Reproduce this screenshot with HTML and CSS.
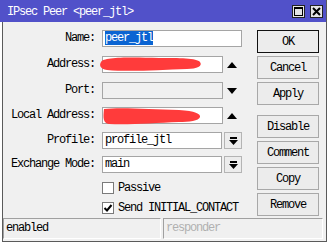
FILE: index.html
```html
<!DOCTYPE html>
<html lang="en">
<head>
    <meta charset="UTF-8">
    <title>IPsec Peer</title>
    <link rel="stylesheet" href="styles.css">
</head>
<body>
    <div class="window">
        <div class="titlebar">
            <span class="title">IPsec Peer &lt;peer_jtl&gt;</span>
            <div class="tb-buttons">
                <span class="tb-btn">
                    <svg width="11" height="11" viewBox="0 0 11 11"><rect x="1.5" y="1.5" width="8" height="8" fill="none" stroke="#000" stroke-width="1"/><rect x="1" y="1" width="9" height="2" fill="#000"/></svg>
                </span>
                <span class="tb-btn">
                    <svg width="11" height="11" viewBox="0 0 11 11"><path d="M2 2 L9 9 M9 2 L2 9" stroke="#000" stroke-width="2"/></svg>
                </span>
            </div>
        </div>

        <div class="content">
            <div class="form">
                <label class="lbl">Name:</label>
                <div class="field"><div class="input wide"><span class="sel">peer_jtl</span></div></div>

                <label class="lbl">Address:</label>
                <div class="field">
                    <div class="input mid redacted">
                        <svg class="scribble" width="106" height="18" viewBox="0 0 106 18"><path d="M2 7 C4 2, 30 2, 60 3 C80 3, 98 3, 101 7 C104 11, 98 14, 88 14 C60 15, 30 17, 8 15 C1 14, 0 10, 2 7 Z" fill="#ff3b3b"/></svg>
                    </div>
                    <svg class="arrow" width="10" height="6" viewBox="0 0 10 6"><polygon points="5,0 10,6 0,6" fill="#000"/></svg>
                </div>

                <label class="lbl">Port:</label>
                <div class="field">
                    <div class="input mid disabled"></div>
                    <svg class="arrow" width="10" height="6" viewBox="0 0 10 6"><polygon points="0,0 10,0 5,6" fill="#000"/></svg>
                </div>

                <label class="lbl">Local Address:</label>
                <div class="field">
                    <div class="input mid redacted">
                        <svg class="scribble" width="106" height="20" viewBox="0 0 106 20"><path d="M5 3 C20 1, 50 3, 80 4 C96 5, 102 8, 101 11 C100 15, 90 16, 80 16 C55 17, 30 19, 10 18 C4 17, 4 12, 5 3 Z" fill="#ff3b3b"/></svg>
                    </div>
                    <svg class="arrow" width="10" height="6" viewBox="0 0 10 6"><polygon points="5,0 10,6 0,6" fill="#000"/></svg>
                </div>

                <label class="lbl">Profile:</label>
                <div class="field">
                    <div class="input combo">profile_jtl</div>
                    <span class="drop"><svg width="9" height="8" viewBox="0 0 9 8"><rect x="1" y="0" width="7" height="2" fill="#000"/><polygon points="0,3 9,3 4.5,8" fill="#000"/></svg></span>
                </div>

                <label class="lbl">Exchange Mode:</label>
                <div class="field">
                    <div class="input combo">main</div>
                    <span class="drop"><svg width="9" height="8" viewBox="0 0 9 8"><rect x="1" y="0" width="7" height="2" fill="#000"/><polygon points="0,3 9,3 4.5,8" fill="#000"/></svg></span>
                </div>

                <span></span>
                <div class="check"><span class="box"></span>Passive</div>

                <span></span>
                <div class="check"><span class="box"><svg width="10" height="10" viewBox="0 0 10 10"><path d="M1.5 5 L4 7.5 L8.5 2" fill="none" stroke="#000" stroke-width="2"/></svg></span>Send INITIAL_CONTACT</div>
            </div>

            <div class="actions">
                <button class="btn default">OK</button>
                <button class="btn">Cancel</button>
                <button class="btn">Apply</button>
                <button class="btn spaced">Disable</button>
                <button class="btn">Comment</button>
                <button class="btn">Copy</button>
                <button class="btn">Remove</button>
            </div>
        </div>

        <div class="statusbar">
            <div class="status">enabled</div>
            <div class="status dim">responder</div>
        </div>
    </div>
</body>
</html>
```

FILE: styles.css
```css
body {
    margin: 0;
    background: #ffffff;
    font-family: "Liberation Mono", "DejaVu Sans Mono", monospace;
    font-size: 12px;
    letter-spacing: -1.2px;
    color: #000;
}

.window {
    width: 323px;
    height: 241px;
    margin-left: 2px;
    background: #f0f0f0;
    border-left: 1px solid #5a5a5a;
    border-right: 1px solid #5a5a5a;
    border-bottom: 1px solid #5a5a5a;
    display: flex;
    flex-direction: column;
}

.titlebar {
    height: 22px;
    margin-left: -3px;
    background: #5151c9;
    color: white;
    display: flex;
    align-items: center;
    padding-left: 7px;
}

.title {
    flex: 1;
    padding-top: 1px;
}

.tb-buttons {
    display: flex;
    gap: 5px;
    margin-right: 3px;
}

.tb-btn {
    width: 11px;
    height: 11px;
    background: #e4e4e4;
    border: 1px solid #222;
    display: flex;
}

.content {
    height: 196px;
    display: flex;
    box-sizing: border-box;
    padding-top: 8px;
}

.form {
    width: 239px;
    display: grid;
    grid-template-columns: 92px 1fr;
    grid-template-rows: 26px 26px 25px 25px 24px 24px 20px 20px;
    column-gap: 7px;
    align-items: start;
}

.lbl {
    text-align: right;
    line-height: 17px;
    white-space: nowrap;
}

.field {
    display: flex;
    align-items: center;
    height: 17px;
}

.input {
    height: 17px;
    box-sizing: border-box;
    background: #fff;
    border: 1px solid #a5a5a5;
    padding-left: 2px;
    line-height: 15px;
    position: relative;
    overflow: hidden;
}

.input.wide { width: 140px; }
.input.mid { width: 121px; }
.input.combo { width: 120px; }
.input.disabled { background: #f0f0f0; }

.sel {
    background: #0a64d2;
    color: #fff;
}

.scribble {
    position: absolute;
    left: -4px;
    top: -2px;
}

.redacted { overflow: visible; }

.arrow {
    margin-left: 4px;
}

.drop {
    width: 18px;
    height: 17px;
    box-sizing: border-box;
    margin-left: 2px;
    background: #ececec;
    border: 1px solid #b4b4b4;
    display: flex;
    align-items: center;
    justify-content: center;
}

.check {
    display: flex;
    align-items: center;
    height: 14px;
    margin-top: 1px;
}

.box {
    width: 12px;
    height: 12px;
    box-sizing: border-box;
    background: #fff;
    border: 1px solid #7a7a7a;
    margin-right: 4px;
    display: flex;
    align-items: center;
    justify-content: center;
}

.actions {
    margin-left: 15px;
    width: 62px;
    display: flex;
    flex-direction: column;
    gap: 3px;
}

.btn {
    height: 23px;
    margin: 0;
    background: #ececec;
    border: 1px solid #a8a8a8;
    font: inherit;
    letter-spacing: inherit;
    color: #000;
    padding: 0;
}

.btn.default { border-color: #111; }
.btn.spaced { margin-top: 7px; }

.statusbar {
    display: flex;
    gap: 2px;
    padding: 0 0 2px 0;
}

.status {
    height: 21px;
    box-sizing: border-box;
    border-top: 1px solid #a0a0a0;
    border-left: 1px solid #a0a0a0;
    border-bottom: 1px solid #fff;
    border-right: 1px solid #fff;
    line-height: 19px;
    padding-left: 2px;
    width: 158px;
}

.status.dim {
    width: 160px;
    color: #b0b0b0;
}
```
